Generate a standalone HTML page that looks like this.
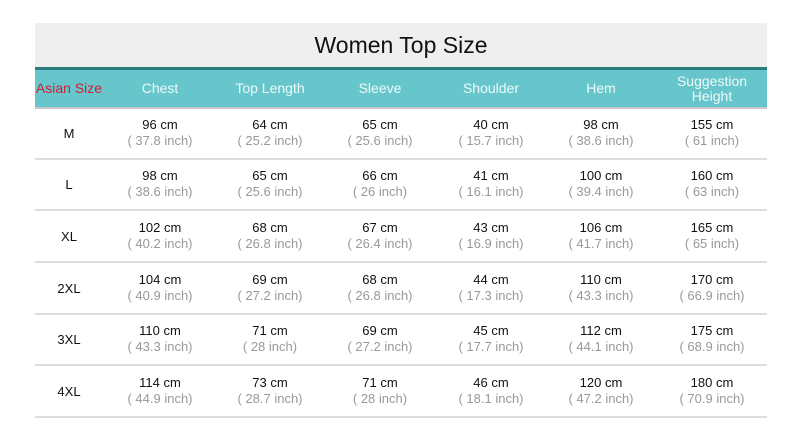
<!DOCTYPE html>
<html><head><style>
body{margin:0;width:800px;height:438px;background:#fff;position:relative;font-family:"Liberation Sans",Arial,sans-serif;overflow:hidden}
.a{position:absolute}
.title{left:35px;top:23px;width:732px;height:44px;background:#efefef;font-size:23px;text-align:center;line-height:44px;color:#111}
.dl{left:35px;top:67px;width:732px;height:3px;background:#2e7d7e}
.hd{left:35px;top:70px;width:732px;height:37px;background:#66c6cb}
.gl{left:35px;top:107px;width:732px;height:2px;background:#c8c8c8}
.h{position:absolute;top:70px;height:37px;display:flex;align-items:center;justify-content:center;text-align:center;color:#eefafa;font-size:14px;line-height:15px;width:110px}
.row{position:absolute;left:0;width:800px;height:52px}
.c{position:absolute;top:8px;width:110px;text-align:center;font-size:13px;line-height:16px;color:#111}
.c span{color:#999;display:block}
.s{position:absolute;top:17px;left:14px;width:110px;text-align:center;font-size:13px;line-height:16px;color:#111}
.sep{position:absolute;left:35px;top:49px;width:732px;height:2px;background:#ddd}
.c1{left:105px}.c2{left:215px}.c3{left:325px}.c4{left:436px}.c5{left:546px}.c6{left:657px}
</style></head><body>
<div class="a title">Women Top Size</div>
<div class="a dl"></div><div class="a hd"></div><div class="a gl"></div>
<div class="h" style="left:14px;color:#d0203a">Asian Size</div>
<div class="h" style="left:105px">Chest</div>
<div class="h" style="left:215px">Top Length</div>
<div class="h" style="left:325px">Sleeve</div>
<div class="h" style="left:436px">Shoulder</div>
<div class="h" style="left:546px">Hem</div>
<div class="h" style="left:657px">Suggestion<br>Height</div>

<div class="row" style="top:109px"><div class="s">M</div>
<div class="c c1">96 cm<span>( 37.8 inch)</span></div><div class="c c2">64 cm<span>( 25.2 inch)</span></div><div class="c c3">65 cm<span>( 25.6 inch)</span></div><div class="c c4">40 cm<span>( 15.7 inch)</span></div><div class="c c5">98 cm<span>( 38.6 inch)</span></div><div class="c c6">155 cm<span>( 61 inch)</span></div><div class="sep"></div></div>

<div class="row" style="top:160px"><div class="s">L</div>
<div class="c c1">98 cm<span>( 38.6 inch)</span></div><div class="c c2">65 cm<span>( 25.6 inch)</span></div><div class="c c3">66 cm<span>( 26 inch)</span></div><div class="c c4">41 cm<span>( 16.1 inch)</span></div><div class="c c5">100 cm<span>( 39.4 inch)</span></div><div class="c c6">160 cm<span>( 63 inch)</span></div><div class="sep"></div></div>

<div class="row" style="top:212px"><div class="s">XL</div>
<div class="c c1">102 cm<span>( 40.2 inch)</span></div><div class="c c2">68 cm<span>( 26.8 inch)</span></div><div class="c c3">67 cm<span>( 26.4 inch)</span></div><div class="c c4">43 cm<span>( 16.9 inch)</span></div><div class="c c5">106 cm<span>( 41.7 inch)</span></div><div class="c c6">165 cm<span>( 65 inch)</span></div><div class="sep"></div></div>

<div class="row" style="top:264px"><div class="s">2XL</div>
<div class="c c1">104 cm<span>( 40.9 inch)</span></div><div class="c c2">69 cm<span>( 27.2 inch)</span></div><div class="c c3">68 cm<span>( 26.8 inch)</span></div><div class="c c4">44 cm<span>( 17.3 inch)</span></div><div class="c c5">110 cm<span>( 43.3 inch)</span></div><div class="c c6">170 cm<span>( 66.9 inch)</span></div><div class="sep"></div></div>

<div class="row" style="top:315px"><div class="s">3XL</div>
<div class="c c1">110 cm<span>( 43.3 inch)</span></div><div class="c c2">71 cm<span>( 28 inch)</span></div><div class="c c3">69 cm<span>( 27.2 inch)</span></div><div class="c c4">45 cm<span>( 17.7 inch)</span></div><div class="c c5">112 cm<span>( 44.1 inch)</span></div><div class="c c6">175 cm<span>( 68.9 inch)</span></div><div class="sep"></div></div>

<div class="row" style="top:367px"><div class="s">4XL</div>
<div class="c c1">114 cm<span>( 44.9 inch)</span></div><div class="c c2">73 cm<span>( 28.7 inch)</span></div><div class="c c3">71 cm<span>( 28 inch)</span></div><div class="c c4">46 cm<span>( 18.1 inch)</span></div><div class="c c5">120 cm<span>( 47.2 inch)</span></div><div class="c c6">180 cm<span>( 70.9 inch)</span></div><div class="sep"></div></div>
</body></html>
